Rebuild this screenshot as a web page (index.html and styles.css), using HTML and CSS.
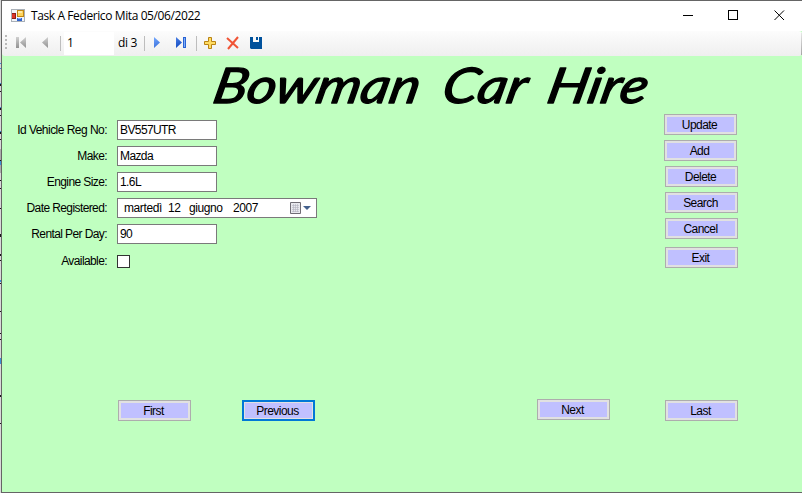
FILE: index.html
```
<!DOCTYPE html>
<html lang="en">
<head>
<meta charset="utf-8">
<title>Task A Federico Mita 05/06/2022</title>
<link rel="stylesheet" href="styles.css">
</head>
<body>
<div class="desktop">
<svg class="edge" width="1" height="493" shape-rendering="crispEdges"><path d="M0 0h1v493H0z" fill="#d9d9d9"/><path d="M0 149h1v24H0z" fill="#ababab"/><path d="M0 63h1v1H0zM0 68h1v1H0zM0 83h1v1H0zM0 107h1v1H0zM0 131h1v1H0zM0 161h1v4H0zM0 280h1v2H0zM0 358h1v6H0z" fill="#3b91d6"/><path d="M0 84h1v2H0zM0 91h1v1H0zM0 108h1v2H0zM0 115h1v1H0zM0 132h1v2H0zM0 139h1v1H0zM0 160h1v1H0zM0 180h1v1H0zM0 188h1v1H0zM0 208h1v1H0zM0 234h1v3H0zM0 254h1v2H0zM0 260h1v1H0zM0 283h1v1H0zM0 311h1v1H0zM0 333h1v1H0zM0 339h1v1H0zM0 395h1v2H0zM0 423h1v1H0z" fill="#191919"/></svg>
<main class="window">
  <header class="titlebar">
    <svg class="app" width="14" height="14" shape-rendering="crispEdges"><path d="M.5.500h13v12H.5z" fill="#f2f4f7" stroke="#a9b0b8"/><path d="M1 4h4v6H1z" fill="#8c1e18"/><path d="M1 5h3v4H1z" fill="#dc3528"/><path d="M6 1h7v7H6z" fill="#c18713"/><path d="M7 2h5v5H7z" fill="#ffd45b"/><path d="M7 2h4v2H7z" fill="#ffe9a5"/><path d="M6 9h5v3H6z" fill="#3164cd"/><path d="M7 9h3v1H7z" fill="#85aeff"/></svg>
    <h1>Task A Federico Mita 05/06/2022</h1>
    <svg class="controls" width="102" height="11" fill="none" stroke="#000"><path d="M0 5.500h10M45.500.5h9v9h-9z" shape-rendering="crispEdges"/><path d="m91.500.5 9.500 9.500m0-9.500-9.500 9.500"/></svg>
  </header>
  <nav class="toolbar">
    <svg class="tools back" width="53" height="25"><defs><linearGradient id="g" x2="0" y2="1"><stop stop-color="#d0d0d0"/><stop offset="1" stop-color="#929292"/></linearGradient></defs><path d="M3 4h2v2H3zm0 4h2v2H3zm0 4h2v2H3zm0 4h2v2H3z" fill="#b9b9b9"/><path d="M14 6h3v11h-3zM24 6v11l-6-5.500zM46 6v11l-6-5.500z" fill="url(#g)"/></svg>
    <i class="sep first"></i><span class="position">1</span><span class="count">di 3</span><i class="sep"></i>
    <svg class="tools forward" width="39" height="25"><defs><linearGradient id="b" x2="1" y2="1"><stop stop-color="#75a9ff"/><stop offset="1" stop-color="#0b43bd"/></linearGradient></defs><path d="M4 6v11l6-5.500zM26 6v11l6-5.500z" fill="url(#b)"/><path d="M33 6h3v11h-3z" fill="#2a63d4"/><path d="M34 7h1v9h-1z" fill="#7fb0f8"/></svg>
    <i class="sep"></i>
    <svg class="tools edit" width="68" height="25"><path d="M11.500 6.500h3v4h4v3h-4v4h-3v-4h-4v-3h4z" fill="#ffdc62" stroke="#b98313"/><path d="m30 7 11 10M41 6 31 18" stroke="#f05436" stroke-width="2"/><path d="M53 6h12v12H54l-1-1z" fill="#00519c"/><path d="M56 6h6v5h-6z" fill="#f8f8f8"/><path d="M59 6h2v3h-2z" fill="#00519c"/></svg>
    <i class="end"></i>
  </nav>
  <section class="form">
    <svg class="brand" viewBox="0 0 460 58" width="460" height="58"><g transform="translate(0 47) skewX(-12)"><text x="9" y="0" textLength="206" lengthAdjust="spacingAndGlyphs">Bowman</text><text x="238" y="0" textLength="84" lengthAdjust="spacingAndGlyphs">Car</text><text x="343" y="0" textLength="100" lengthAdjust="spacingAndGlyphs">Hire</text></g></svg>
    <div class="content">
      <div class="fields">
        <label><span>Id Vehicle Reg No:</span><b>BV557UTR</b></label>
        <label><span>Make:</span><b>Mazda</b></label>
        <label><span>Engine Size:</span><b>1.6L</b></label>
        <label><span>Date Registered:</span><b class="date"><em class="weekday">martedì</em><em class="day">12</em><em class="month">giugno</em><em>2007</em><svg width="22" height="13"><path d="M.5.500h10v11H.5z" fill="#e9e9ee" stroke="#706d75"/><path d="M2 3.500h7M2 5.500h7M2 7.500h7M2 9.500h7M3.500 2v8M5.500 2v8M7.500 2v8" stroke="#b4b4c0" stroke-width=".6"/><path d="M13 4h8l-4 4z" fill="#44618d"/></svg></b></label>
        <label><span>Rental Per Day:</span><b>90</b></label>
        <label class="available"><span>Available:</span><b class="check"></b></label>
      </div>
      <div class="actions"><button>Update</button><button>Add</button><button class="inset">Delete</button><button class="inset">Search</button><button class="inset">Cancel</button><button class="inset exit">Exit</button></div>
    </div>
    <footer><button>First</button><button class="selected">Previous</button><button class="next">Next</button><button>Last</button></footer>
  </section>
</main>
</div>
</body>
</html>
```
FILE: styles.css
```
*{box-sizing:border-box}
body{margin:0;font:12px/14px "Liberation Sans",Arial,sans-serif;letter-spacing:-.6px;color:#000;overflow:hidden}
.desktop{display:flex;width:802px;height:493px}
.edge{display:block;flex:none}
.window{width:801px;border:1px solid #656565;border-right:0;background:#c0ffc0}
.titlebar{height:30px;background:#fff;display:flex;align-items:center;padding:0 17px 0 9px}
.app{margin-top:-1px}
h1{font:12px/16px "Open Sans","Noto Sans",sans-serif;letter-spacing:-.4px;margin:0 0 0 6px;white-space:nowrap}
.controls{margin-left:auto;margin-top:-1px}
.toolbar{height:25px;display:flex;align-items:center;background:linear-gradient(#fcfcfc,#efefef);border-radius:0 3px 3px 3px;font:12px/16px "Open Sans","Noto Sans",sans-serif}
.tools{display:block;flex:none}
.sep{width:1px;height:15px;background:#bdbdbd;flex:none}
.sep.first{margin-left:5px}
.position{width:50px;height:23px;background:#fff;margin-left:3px;padding:3px}
.count{width:30px;padding-left:4px;white-space:nowrap;letter-spacing:-.3px;margin-top:-1px}
.forward{margin-left:5px}
.forward + .sep{margin-left:7px}
.end{margin-left:auto;width:1px;height:22px;background:linear-gradient(#e5e5e5,#a5a5a5)}
.form{height:436px;display:flex;flex-direction:column}
.brand{display:block;margin-left:200px;flex:none}
.brand text{font:italic 400 49px Lato,"Open Sans",sans-serif;fill:#000;stroke:#000;stroke-width:1.3px;stroke-linejoin:round;letter-spacing:0}
.content{height:286px;display:flex;justify-content:space-between;padding-right:64px}
.fields{padding-top:6px;width:320px}
.fields label{height:20px;margin-bottom:6px;display:flex;align-items:center}
.fields label > span{width:105px;text-align:right;white-space:nowrap;margin-right:10px}
.fields label:first-child > span{letter-spacing:-.53px}
.fields b{display:flex;align-items:center;width:100px;height:20px;font-weight:400;background:#fff;border:1px solid #7a7a7a;padding-left:2px}
.fields .date{width:200px;padding-left:6px;letter-spacing:-.4px}
em{font-style:normal}
.weekday{width:44px}
.day{width:21px}
.month{width:44px}
.date svg{margin-left:auto;margin-right:4px}
.fields .available{margin-top:7px}
.fields .check{width:13px;height:13px;border-color:#333}
.actions{width:74px;display:flex;flex-direction:column;gap:5px;align-items:flex-start}
button{width:73px;height:21px;flex:none;font:12px/14px "Liberation Sans",Arial,sans-serif;letter-spacing:-.55px;color:#000;background:#c0c0ff;border:1px solid #adadad;box-shadow:inset 0 0 0 2px #e1e1e1;padding:0 2px 0 0;text-align:center}
.inset{margin-left:1px}
.exit{margin-top:3px}
footer{display:flex;padding-left:116px}
footer button:nth-child(2){margin-left:51px}
footer .next{margin:-1px 0 0 222px}
footer button:last-child{margin-left:55px}
.selected{border:2px solid #0078d7;box-shadow:inset 0 0 0 1px #e1e1e1}
```
